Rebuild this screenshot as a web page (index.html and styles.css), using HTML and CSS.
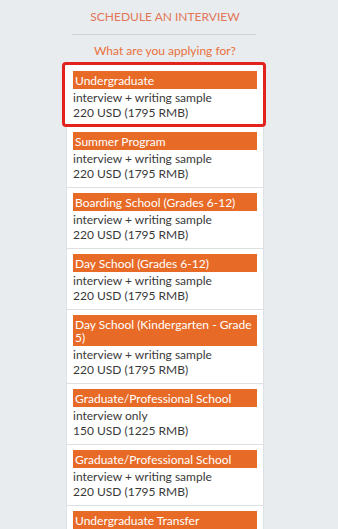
FILE: index.html
```html
<!DOCTYPE html>
<html>
<head>
<meta charset="utf-8">
<link rel="stylesheet" href="styles.css">
</head>
<body>
<div class="page">
  <div class="title">SCHEDULE AN INTERVIEW</div>
  <div class="divider"></div>
  <div class="question">What are you applying for?</div>
  <div class="list">
    <div class="card selected">
      <div class="bar">Undergraduate</div>
      <div class="desc">interview + writing sample<br>220 USD (1795 RMB)</div>
    </div>
    <div class="card">
      <div class="bar">Summer Program</div>
      <div class="desc">interview + writing sample<br>220 USD (1795 RMB)</div>
    </div>
    <div class="card">
      <div class="bar">Boarding School (Grades 6-12)</div>
      <div class="desc">interview + writing sample<br>220 USD (1795 RMB)</div>
    </div>
    <div class="card">
      <div class="bar">Day School (Grades 6-12)</div>
      <div class="desc">interview + writing sample<br>220 USD (1795 RMB)</div>
    </div>
    <div class="card">
      <div class="bar">Day School (Kindergarten - Grade 5)</div>
      <div class="desc">interview + writing sample<br>220 USD (1795 RMB)</div>
    </div>
    <div class="card">
      <div class="bar">Graduate/Professional School</div>
      <div class="desc">interview only<br>150 USD (1225 RMB)</div>
    </div>
    <div class="card">
      <div class="bar">Graduate/Professional School</div>
      <div class="desc">interview + writing sample<br>220 USD (1795 RMB)</div>
    </div>
    <div class="card">
      <div class="bar">Undergraduate Transfer</div>
      <div class="desc">interview + writing sample<br>220 USD (1795 RMB)</div>
    </div>
  </div>
</div>
</body>
</html>
```
FILE: styles.css
```css
html, body {
  margin: 0;
  padding: 0;
  background: #e9ecef;
  font-family: Lato, "Open Sans", sans-serif;
  overflow: hidden;
}
.page {
  width: 198px;
  margin-left: 66px;
}
.title {
  margin-top: 9px;
  font-size: 12px;
  line-height: 16px;
  text-align: center;
  color: #e27656;
}
.divider {
  height: 1px;
  background: #cfd3d7;
  margin: 9px 8px 0 6px;
}
.question {
  margin-top: 8px;
  font-size: 12px;
  line-height: 16px;
  text-align: center;
  color: #e8703c;
}
.list {
  margin-top: 3px;
  background: #fff;
  border-left: 1px solid #dde0e4;
  border-right: 1px solid #dde0e4;
}
.card {
  padding: 5px 6px 6px 6px;
  border-bottom: 1px solid #dde0e3;
  background: #fff;
}
.card.selected {
  margin: 0 -3px 0 -5px;
  border: 3px solid #e3211d;
  border-radius: 4px;
  padding: 6px 6px 4px 8px;
}
.bar {
  background: #e86a27;
  color: #fff;
  font-size: 12px;
  line-height: 13px;
  padding: 2.5px 2px;
}
.desc {
  margin-top: 1px;
  font-size: 12px;
  line-height: 15px;
  color: #3a3a3a;
}
```
